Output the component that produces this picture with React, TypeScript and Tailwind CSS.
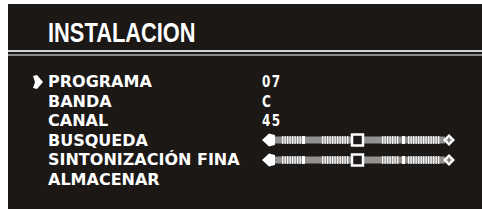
import React from 'react';

const rows = [
  { label: 'PROGRAMA', value: '07', active: true },
  { label: 'BANDA', value: 'C' },
  { label: 'CANAL', value: '45' },
  { label: 'BUSQUEDA', slider: true },
  { label: 'SINTONIZACIÓN FINA', slider: true },
  { label: 'ALMACENAR' },
];

function ticks(from: number, to: number) {
  const out: number[] = [];
  for (let x = from; x <= to; x += 2.5) out.push(x);
  return out;
}

function Slider() {
  const fine = [...ticks(20, 38), ...ticks(60, 86), ...ticks(120, 136), ...ticks(146, 178)];
  return (
    <svg width="194" height="14" viewBox="0 0 194 14">
      <rect x="11" y="3.5" width="172" height="7" fill="#929292" />
      {fine.map((x) => (
        <rect key={x} x={x} y="3" width="1.3" height="8" fill="#f4f4f4" />
      ))}
      <rect x="40" y="3" width="3" height="8" fill="#fff" />
      <rect x="140" y="3" width="3" height="8" fill="#fff" />
      <polygon points="0,7 7,0.5 13,2 13,12 7,13.5" fill="#fff" />
      <rect x="90" y="1.5" width="11" height="11" fill="#1d1a19" stroke="#fff" strokeWidth="2.5" />
      <polygon points="181,7 187,1 193,7 187,13" fill="#fff" />
      <path d="M187 4.5v5M184.5 7h5" stroke="#555" strokeWidth="1.2" />
    </svg>
  );
}

export default function App() {
  return (
    <div className="w-[482px] h-[209px] bg-white pl-2 pt-1 overflow-hidden">
      <div className="h-full bg-[#1b1816] flex flex-col">
        {/* Header */}
        <div className="h-[46px] pl-10 pt-[14.5px]">
          <h1 className="text-[28px] leading-[28px] font-bold text-white origin-left scale-x-[0.78] font-['Liberation_Sans',Arial,sans-serif] whitespace-nowrap">
            INSTALACION
          </h1>
        </div>
        <div className="h-[2px] bg-[#d4d4d4]" />
        <div className="h-[2px]" />
        <div className="h-[2px] bg-[#8a8a8a]" />

        {/* Menu */}
        <div className="pt-[16px] font-['DejaVu_Sans',sans-serif] font-bold text-white text-[16px]">
          {rows.map((row) => (
            <div key={row.label} className="relative flex items-center h-[19.5px] pl-10">
              {row.active && (
                <svg className="absolute left-6 top-[3px]" width="11" height="14" viewBox="0 0 11 14">
                  <path d="M1 1 L5 0 L11 7 L5 14 L1 13 L3 7 Z" fill="#fff" />
                </svg>
              )}
              <span className="w-[214px] leading-[19.5px] whitespace-nowrap">{row.label}</span>
              {row.slider ? (
                <Slider />
              ) : (
                <span className="leading-[19.5px] tracking-[2px] scale-x-[0.75] origin-left">{row.value}</span>
              )}
            </div>
          ))}
        </div>
      </div>
    </div>
  );
}
